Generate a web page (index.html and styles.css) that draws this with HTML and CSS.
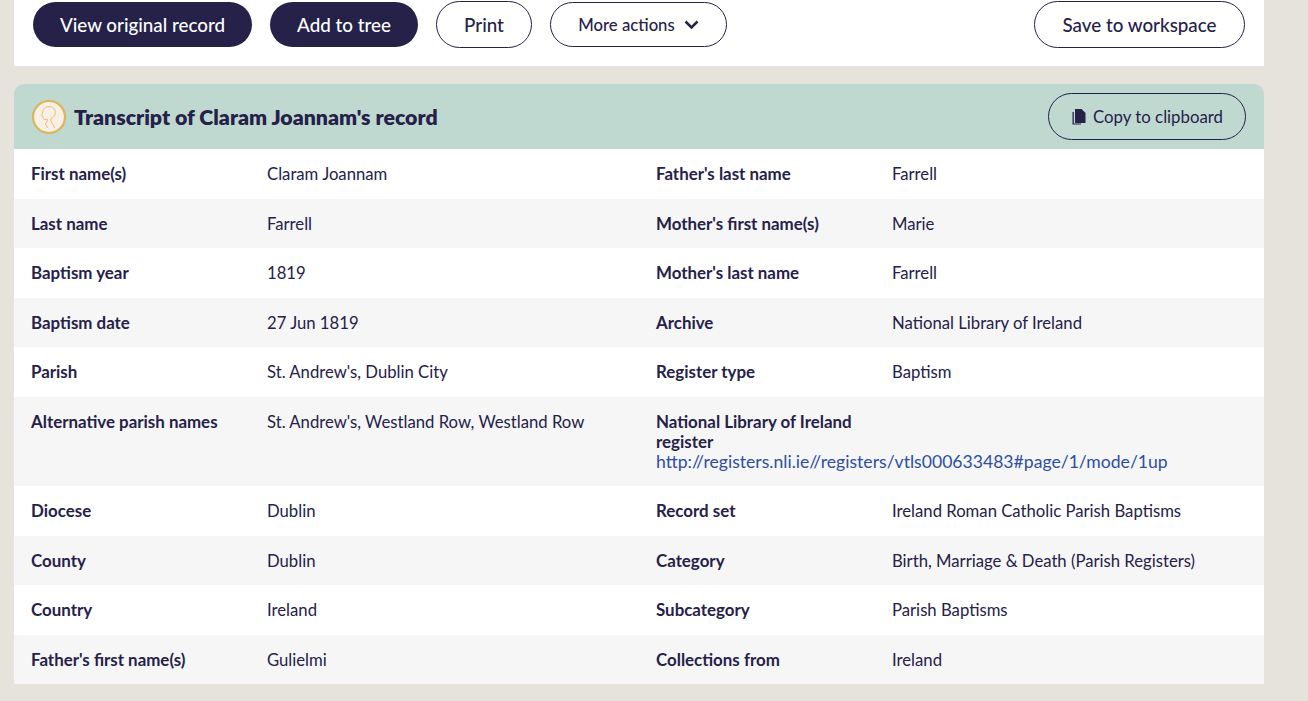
FILE: index.html
```html
<!DOCTYPE html>
<html lang="en" dir="ltr">
<head>
    <meta charset="utf-8">
    <title>Transcript of Claram Joannam's record</title>
    <link rel="stylesheet" href="styles.css">
</head>
<body>
<div class="wrapper">
    <div class="actions">
        <a href="#" class="btn btn-dark btn-view">View original record</a>
        <a href="#" class="btn btn-dark btn-add">Add to tree</a>
        <a href="#" class="btn btn-line btn-print">Print</a>
        <a href="#" class="btn btn-line btn-more">More actions
            <svg class="chevron" width="15" height="10" viewBox="0 0 15 10"><path d="M1.500 1.500 7.500 7.500l6-6" fill="none" stroke="#252149" stroke-width="2.500"/></svg>
        </a>
        <a href="#" class="btn btn-line btn-save">Save to workspace</a>
    </div>
    <div class="record">
        <div class="record-head">
            <svg class="portrait" width="36" height="36" viewBox="0 0 36 36">
                <circle cx="18" cy="18" r="16" fill="#f8f0e4" stroke="#dcb459" stroke-width="2.200"/>
                <path d="M11.500 14c0-3.800 3-6.500 6.500-6.500s6.300 2.500 6.300 6c0 2.800-1.800 5-4.300 5.800-.4 2.200.3 4.700 2.300 6.700 .9.900 1.200 2 1.200 3.200" fill="none" stroke="#e2c07a" stroke-width="1"/>
                <path d="M11.500 14c0 1.200-.8 2-1 2.800 .5.400 1 .5 1.300.6 0 1.500.4 2.800 1.700 3.100 1 .2 2-.1 2.800-.4 .2 2.400-.7 4-2.300 5 1.400 1 2.200 2.400 2.500 4" fill="none" stroke="#e2c07a" stroke-width="1"/>
            </svg>
            <h2 class="record-title">Transcript of Claram Joannam's record</h2>
            <a href="#" class="btn btn-line btn-copy">
                <svg class="copy-icon" width="15" height="16" viewBox="0 0 15 16"><path d="M4 0h6.500L14.500 4v10H4z" fill="#252149"/><path d="M2.800 3H1.500v12.500h8.500v-1H2.800z" fill="#252149"/></svg>
                Copy to clipboard
            </a>
        </div>
        <div class="row">
            <div class="label">First name(s)</div><div class="value">Claram Joannam</div>
            <div class="label">Father's last name</div><div class="value">Farrell</div>
        </div>
        <div class="row">
            <div class="label">Last name</div><div class="value">Farrell</div>
            <div class="label">Mother's first name(s)</div><div class="value">Marie</div>
        </div>
        <div class="row">
            <div class="label">Baptism year</div><div class="value">1819</div>
            <div class="label">Mother's last name</div><div class="value">Farrell</div>
        </div>
        <div class="row">
            <div class="label">Baptism date</div><div class="value">27 Jun 1819</div>
            <div class="label">Archive</div><div class="value">National Library of Ireland</div>
        </div>
        <div class="row">
            <div class="label">Parish</div><div class="value">St. Andrew's, Dublin City</div>
            <div class="label">Register type</div><div class="value">Baptism</div>
        </div>
        <div class="row">
            <div class="label">Alternative parish names</div><div class="value">St. Andrew's, Westland Row, Westland Row</div>
            <div class="wide">
                <div class="label label-narrow">National Library of Ireland register</div>
                <a href="#" class="link">http://registers.nli.ie//registers/vtls000633483#page/1/mode/1up</a>
            </div>
        </div>
        <div class="row">
            <div class="label">Diocese</div><div class="value">Dublin</div>
            <div class="label">Record set</div><div class="value">Ireland Roman Catholic Parish Baptisms</div>
        </div>
        <div class="row">
            <div class="label">County</div><div class="value">Dublin</div>
            <div class="label">Category</div><div class="value">Birth, Marriage &amp; Death (Parish Registers)</div>
        </div>
        <div class="row">
            <div class="label">Country</div><div class="value">Ireland</div>
            <div class="label">Subcategory</div><div class="value">Parish Baptisms</div>
        </div>
        <div class="row">
            <div class="label">Father's first name(s)</div><div class="value">Gulielmi</div>
            <div class="label">Collections from</div><div class="value">Ireland</div>
        </div>
    </div>
</div>
</body>
</html>
```
FILE: styles.css
```css
*{
    margin:0;
    padding:0;
    box-sizing:border-box;
    font-family:'Lato', 'Open Sans', sans-serif;
}
html,body{
    height:100%;
    overflow:hidden;
    background:#e6e2dc;
    color:#252149;
}
a{
    text-decoration:none;
}
.wrapper{
    width:1250px;
    margin-left:14px;
}
.actions{
    display:flex;
    align-items:center;
    gap:18px;
    height:66px;
    padding:0 19px 17px 19px;
    background:#fff;
}
.btn{
    display:flex;
    align-items:center;
    justify-content:center;
    height:45px;
    border-radius:24px;
    font-size:18.8px;
    font-weight:500;
    color:#252149;
}
.btn-dark{
    background:#252149;
    color:#fff;
}
.btn-line{
    border:1px solid #252149;
}
.btn-view{
    width:219px;
}
.btn-add{
    width:148px;
}
.btn-print{
    width:96px;
    height:47px;
}
.btn-more{
    width:177px;
    gap:9px;
    font-size:16.7px;
}
.btn-save{
    width:211px;
    height:47px;
    margin-left:auto;
}
.record-head{
    display:flex;
    align-items:center;
    height:65px;
    margin-top:18px;
    padding:0 18px 0 17px;
    background:#c0d9d0;
    border-radius:10px 10px 0 0;
}
.portrait{
    flex:none;
    margin-right:7px;
}
.record-title{
    font-size:21.3px;
    font-weight:800;
    line-height:26px;
}
.btn-copy{
    width:198px;
    height:47px;
    gap:7px;
    margin-left:auto;
    font-size:16.8px;
    font-weight:400;
}
.row{
    display:grid;
    grid-template-columns:236px 389px 236px 1fr;
    padding:15px 17px 14.5px;
    background:#fff;
    font-size:16.7px;
    line-height:20px;
}
.row:nth-child(odd){
    background:#f6f6f6;
}
.label{
    font-weight:700;
    font-size:16.9px;
}
.label-narrow{
    width:215px;
}
.wide{
    grid-column:span 2;
}
.link{
    color:#2d4ea2;
    font-size:17.6px;
}
```
